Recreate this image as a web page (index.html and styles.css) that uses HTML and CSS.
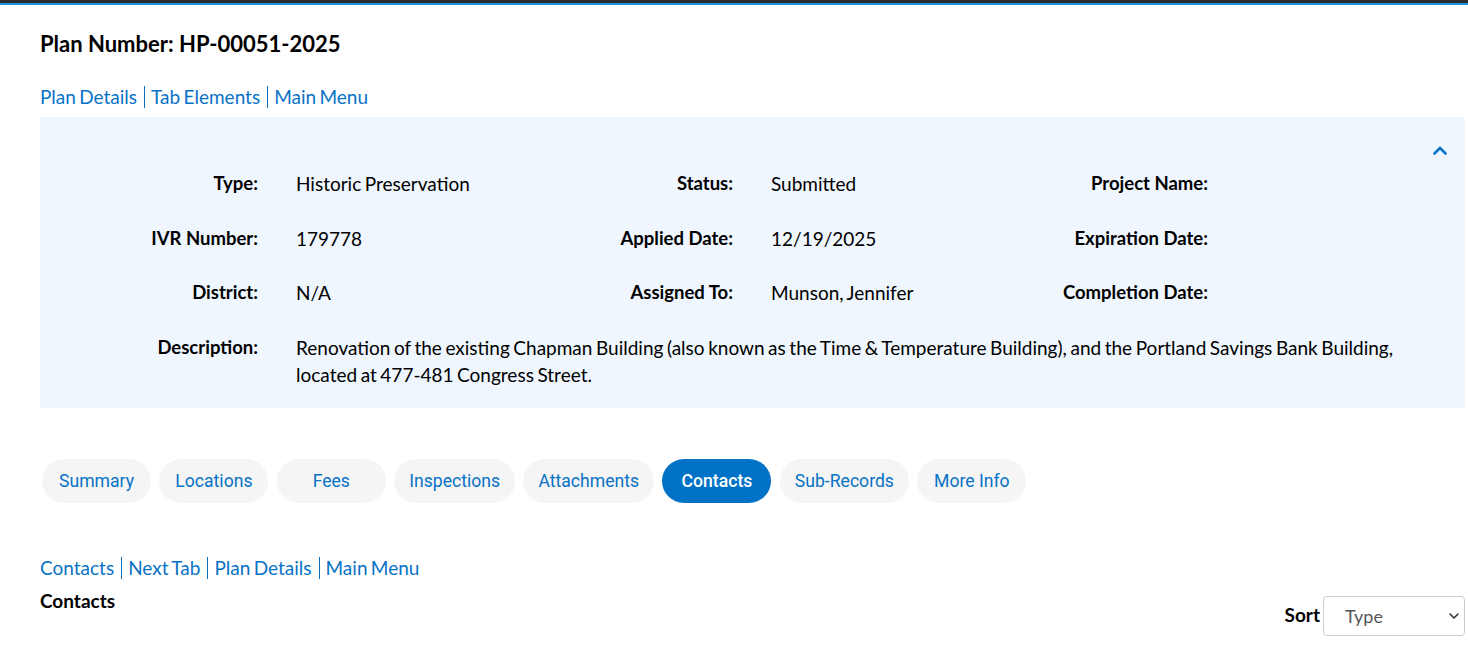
FILE: index.html
```html
<!DOCTYPE html>
<html lang="en">
<head>
<meta charset="utf-8">
<title>Plan HP-00051-2025</title>
<link rel="stylesheet" href="styles.css">
</head>
<body>
<div class="topbar"></div>
<main class="page">
  <h1 class="title">Plan Number: HP-00051-2025</h1>
  <nav class="crumbs">
    <a href="#">Plan Details</a><a href="#">Tab Elements</a><a href="#">Main Menu</a>
  </nav>

  <section class="panel">
    <div class="panel-head">
      <button class="toggle" aria-label="Collapse">
        <svg width="14" height="9" viewBox="0 0 14 9"><path d="M1.5 7.5 L7 2 L12.5 7.5" fill="none" stroke="#0872c6" stroke-width="2.6" stroke-linecap="round" stroke-linejoin="round"/></svg>
      </button>
    </div>
    <div class="details">
      <div class="lbl">Type:</div><div class="val">Historic Preservation</div>
      <div class="lbl">Status:</div><div class="val">Submitted</div>
      <div class="lbl">Project Name:</div><div class="val"></div>

      <div class="lbl">IVR Number:</div><div class="val">179778</div>
      <div class="lbl">Applied Date:</div><div class="val">12/19/2025</div>
      <div class="lbl">Expiration Date:</div><div class="val"></div>

      <div class="lbl">District:</div><div class="val">N/A</div>
      <div class="lbl">Assigned To:</div><div class="val">Munson, Jennifer</div>
      <div class="lbl">Completion Date:</div><div class="val"></div>

      <div class="lbl">Description:</div>
      <div class="val desc">Renovation of the existing Chapman Building (also known as the Time &amp; Temperature Building), and the Portland Savings Bank Building, located at 477-481 Congress Street.</div>
    </div>
  </section>

  <nav class="tabs">
    <a class="tab" href="#">Summary</a>
    <a class="tab" href="#">Locations</a>
    <a class="tab" href="#">Fees</a>
    <a class="tab" href="#">Inspections</a>
    <a class="tab" href="#">Attachments</a>
    <a class="tab active" href="#">Contacts</a>
    <a class="tab" href="#">Sub-Records</a>
    <a class="tab" href="#">More Info</a>
  </nav>

  <nav class="crumbs crumbs-lower">
    <a href="#">Contacts</a><a href="#">Next Tab</a><a href="#">Plan Details</a><a href="#">Main Menu</a>
  </nav>

  <div class="section-row">
    <h2 class="section-title">Contacts</h2>
    <div class="sort">
      <label for="sort">Sort</label>
      <div class="select-wrap">
        <select id="sort"><option>Type</option></select>
        <svg class="caret" width="10" height="6" viewBox="0 0 10 6"><path d="M1 1 L5 5 L9 1" fill="none" stroke="#333" stroke-width="1.6" stroke-linecap="round" stroke-linejoin="round"/></svg>
      </div>
    </div>
  </div>
</main>
</body>
</html>
```

FILE: styles.css
```css
* { box-sizing: border-box; }

html, body {
  margin: 0;
  padding: 0;
  background: #fff;
}

body {
  font-family: Lato, "Liberation Sans", sans-serif;
  font-size: 19px;
  line-height: 27px;
  color: #000;
  overflow: hidden;
}

.topbar {
  height: 5px;
  background: #2c2c2c;
  border-bottom: 2px solid #1a94e6;
}

.page {
  padding: 0 3px 0 40px;
}

.title {
  margin: 26px 0 0;
  font-size: 22px;
  line-height: 26px;
  font-weight: 700;
}

.crumbs {
  display: flex;
  margin-top: 29px;
  word-spacing: -1.5px;
}

.crumbs a {
  display: block;
  color: #0872c6;
  text-decoration: none;
  padding: 0 7px 0 6px;
  border-left: 1px solid #0872c6;
  height: 22px;
  line-height: 22px;
}

.crumbs a:first-child {
  border-left: none;
  padding-left: 0;
}

.panel {
  margin-top: 9px;
  background: #eff6fe;
  padding: 20px 30px 20px 0;
}

.panel-head {
  display: flex;
  justify-content: flex-end;
  height: 26px;
  margin-right: -18px;
}

.toggle {
  border: 0;
  background: transparent;
  padding: 0;
  width: 26px;
  height: 26px;
  display: flex;
  align-items: center;
  justify-content: center;
  cursor: pointer;
}

.details {
  margin-top: 7px;
  display: grid;
  grid-template-columns: 218px 257px 218px 257px 218px 1fr;
  row-gap: 27.7px;
}

.lbl {
  font-weight: 700;
  font-size: 18.5px;
  text-align: right;
  white-space: nowrap;
}

.val {
  padding-left: 38px;
  word-spacing: -1.3px;
}

.desc {
  grid-column: 2 / -1;
}

.tabs {
  display: flex;
  gap: 8.4px;
  margin: 51px 0 0 2px;
  font-family: Roboto, "Liberation Sans", sans-serif;
}

.tab {
  display: flex;
  align-items: center;
  justify-content: center;
  height: 44px;
  min-width: 109px;
  padding: 0 15px;
  border-radius: 22px;
  background: #f5f5f5;
  color: #0872c6;
  text-decoration: none;
  font-size: 17.6px;
}

.tab.active {
  background: #0072c6;
  color: #fff;
  font-weight: 500;
}

.crumbs-lower {
  margin-top: 54px;
}

.section-row {
  display: flex;
  justify-content: space-between;
  align-items: flex-start;
  margin-top: 8px;
}

.section-title {
  margin: 0;
  font-size: 19px;
  line-height: 27px;
  font-weight: 700;
}

.sort {
  display: flex;
  align-items: center;
  gap: 3px;
  margin-top: 9px;
}

.sort label {
  font-weight: 700;
  margin-bottom: 4px;
}

.select-wrap {
  position: relative;
}

.select-wrap select {
  appearance: none;
  -webkit-appearance: none;
  display: block;
  width: 142px;
  height: 40px;
  border: 1px solid #ccc;
  border-radius: 4px;
  background: #fff;
  font-family: Lato, "Liberation Sans", sans-serif;
  font-size: 18px;
  color: #555;
  padding: 0 20px 0 21px;
}

.caret {
  position: absolute;
  right: 6px;
  top: 17px;
  pointer-events: none;
}
```
